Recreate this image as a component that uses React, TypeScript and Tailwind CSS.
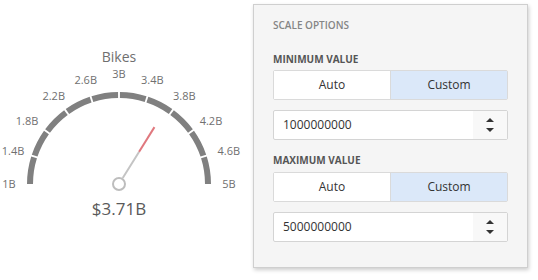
const CX = 119
const CY = 184
const R = 89

const ticks = ['1B', '1.4B', '1.8B', '2.2B', '2.6B', '3B', '3.4B', '3.8B', '4.2B', '4.6B', '5B']

function polar(r: number, deg: number) {
  const a = (deg * Math.PI) / 180
  return [CX + r * Math.cos(a), CY - r * Math.sin(a)]
}

function arcPath(from: number, to: number) {
  const [x1, y1] = polar(R, from)
  const [x2, y2] = polar(R, to)
  return `M ${x1} ${y1} A ${R} ${R} 0 0 1 ${x2} ${y2}`
}

function Gauge() {
  const value = 3.71
  const angle = 180 - ((value - 1) / 4) * 180
  const [gx1, gy1] = polar(7, angle)
  const [gx2, gy2] = polar(38, angle)
  const [rx2, ry2] = polar(67, angle)

  return (
    <svg width="253" height="280" className="block" style={{ fontFamily: '"Open Sans", sans-serif' }}>
      <text x={CX} y={58} textAnchor="middle" dominantBaseline="middle" fontSize="14" fill="#6f6f6f">
        Bikes
      </text>
      {Array.from({ length: 10 }).map((_, i) => {
        const start = 180 - i * 18 - (i === 0 ? 0 : 0.6)
        const end = 180 - (i + 1) * 18 + (i === 9 ? 0 : 0.6)
        return <path key={i} d={arcPath(start, end)} stroke="#808080" strokeWidth="6" fill="none" />
      })}
      {ticks.map((t, i) => {
        const deg = 180 - i * 18
        const a = (deg * Math.PI) / 180
        const c = Math.cos(a)
        const s = Math.sin(a)
        const hw = t.length * 3
        // keep the outermost labels inside the drawing
        const x = Math.max(CX + c * (104 + Math.abs(c) * hw), hw + 1)
        const y = CY - s * (104 + Math.abs(s) * 6)
        return (
          <text key={t} x={x} y={y + 1} textAnchor="middle" dominantBaseline="middle" fontSize="11" fill="#707070">
            {t}
          </text>
        )
      })}
      <line x1={gx1} y1={gy1} x2={gx2} y2={gy2} stroke="#c4c4c4" strokeWidth="2" />
      <line x1={gx2} y1={gy2} x2={rx2} y2={ry2} stroke="#e0787e" strokeWidth="2" />
      <circle cx={CX} cy={CY} r="6" fill="#fff" stroke="#bdbdbd" strokeWidth="2" />
      <text x={CX} y={210} textAnchor="middle" dominantBaseline="middle" fontSize="17" fill="#5a5a5a">
        $3.71B
      </text>
    </svg>
  )
}

function Toggle() {
  return (
    <div className="flex h-[30px] border border-[#dadada] rounded-[2px] text-[12px] text-[#333]">
      <button type="button" className="flex-1 bg-white flex items-center justify-center">
        Auto
      </button>
      <button type="button" className="flex-1 bg-[#dbe8f9] border-l border-[#dadada] flex items-center justify-center">
        Custom
      </button>
    </div>
  )
}

function NumberBox({ value }: { value: string }) {
  return (
    <div className="flex h-[30px] mt-[10px] border border-[#d4d4d4] rounded-[2px] bg-white text-[12px] text-[#333]">
      <div className="flex-1 flex items-center pl-[9px]">{value}</div>
      <div className="w-[34px] bg-[#f8f8f8] flex flex-col items-center justify-center gap-[6px]">
        <span className="w-0 h-0 border-l-[4px] border-r-[4px] border-b-[4px] border-l-transparent border-r-transparent border-b-[#333]" />
        <span className="w-0 h-0 border-l-[4px] border-r-[4px] border-t-[4px] border-l-transparent border-r-transparent border-t-[#333]" />
      </div>
    </div>
  )
}

export default function App() {
  return (
    <div className="w-[538px] h-[280px] bg-white flex" style={{ fontFamily: '"Open Sans", sans-serif' }}>
      <Gauge />
      <div className="mt-[4px] w-[275px] h-[264px] bg-[#f5f5f5] border border-[#cfcfcf] shadow-[1px_2px_4px_rgba(0,0,0,0.2)] px-[19px] pt-[13px]">
        <div className="h-[14px] leading-[14px] text-[10px] font-semibold text-[#858585]">SCALE OPTIONS</div>
        <div className="mt-[20px] h-[14px] leading-[14px] text-[10px] font-bold text-[#555]">MINIMUM VALUE</div>
        <div className="mt-[4px]">
          <Toggle />
          <NumberBox value="1000000000" />
        </div>
        <div className="mt-[13px] h-[14px] leading-[14px] text-[10px] font-bold text-[#555]">MAXIMUM VALUE</div>
        <div className="mt-[5px]">
          <Toggle />
          <NumberBox value="5000000000" />
        </div>
      </div>
    </div>
  )
}
